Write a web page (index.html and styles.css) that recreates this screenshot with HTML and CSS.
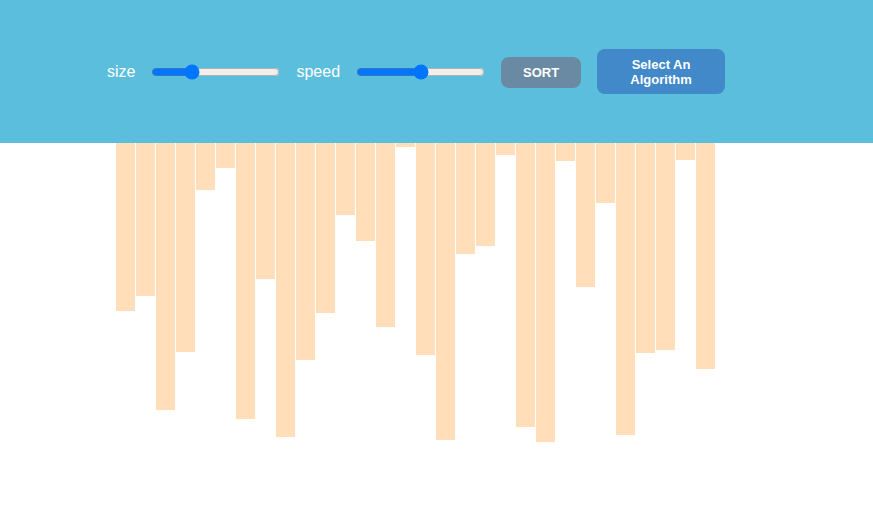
FILE: index.html
```html
<!DOCTYPE html>
<html lang="en">
<head>
  <meta charset="UTF-8">
  <meta name="viewport" content="width=device-width, initial-scale=1.0">
  <title>Sorting Visualizer</title>
  <link rel="stylesheet" href="styles.css">
</head>
<body>

  <header class="toolbar">
    <label class="control">
      <span class="control-label">size</span>
      <input type="range" id="size" min="0" max="100" value="29">
    </label>
    <label class="control">
      <span class="control-label">speed</span>
      <input type="range" id="speed" min="0" max="100" value="50">
    </label>
    <button class="btn btn-sort">SORT</button>
    <button class="btn btn-algo">Select An<br>Algorithm</button>
  </header>

  <main class="bars" id="bars">
    <div class="bar" style="height: 168px"></div>
    <div class="bar" style="height: 152.6px"></div>
    <div class="bar" style="height: 267px"></div>
    <div class="bar" style="height: 209.3px"></div>
    <div class="bar" style="height: 46.6px"></div>
    <div class="bar" style="height: 25.3px"></div>
    <div class="bar" style="height: 276px"></div>
    <div class="bar" style="height: 136.3px"></div>
    <div class="bar" style="height: 294px"></div>
    <div class="bar" style="height: 217px"></div>
    <div class="bar" style="height: 170.3px"></div>
    <div class="bar" style="height: 72.3px"></div>
    <div class="bar" style="height: 97.5px"></div>
    <div class="bar" style="height: 183.7px"></div>
    <div class="bar" style="height: 3.7px"></div>
    <div class="bar" style="height: 212px"></div>
    <div class="bar" style="height: 297.3px"></div>
    <div class="bar" style="height: 111.3px"></div>
    <div class="bar" style="height: 103.3px"></div>
    <div class="bar" style="height: 12px"></div>
    <div class="bar" style="height: 283.7px"></div>
    <div class="bar" style="height: 299px"></div>
    <div class="bar" style="height: 17.7px"></div>
    <div class="bar" style="height: 144px"></div>
    <div class="bar" style="height: 59.5px"></div>
    <div class="bar" style="height: 292px"></div>
    <div class="bar" style="height: 209.7px"></div>
    <div class="bar" style="height: 207px"></div>
    <div class="bar" style="height: 16.5px"></div>
    <div class="bar" style="height: 226px"></div>
  </main>

</body>
</html>
```

FILE: styles.css
```css
/* Global styles */
body {
  margin: 0;
  font-family: 'Liberation Sans', Arial, sans-serif;
  background-color: #fff;
}

/* Top toolbar */
.toolbar {
  height: 143px;
  background-color: #5bbedc;
  display: flex;
  align-items: center;
  padding-left: 107px;
  box-sizing: border-box;
}

.control {
  display: flex;
  align-items: center;
  margin-right: 14px;
}

.control-label {
  color: #fff;
  font-size: 16px;
  margin-right: 14px;
}

.control input {
  width: 129px;
  margin: 2px;
}

.btn {
  border: none;
  border-radius: 8px;
  color: #fff;
  font-family: 'Liberation Sans', Arial, sans-serif;
  font-weight: bold;
  font-size: 13px;
  cursor: pointer;
}

.btn-sort {
  width: 80px;
  height: 31px;
  background-color: #6a8aa3;
  margin-top: 2px;
  margin-right: 16px;
}

.btn-algo {
  width: 128px;
  height: 45px;
  background-color: #4189c9;
  line-height: 15px;
}

/* Bars */
.bars {
  display: flex;
  align-items: flex-start;
  padding-left: 116px;
}

.bar {
  width: 19px;
  margin-right: 1px;
  background-color: #ffdeb9;
}
```
